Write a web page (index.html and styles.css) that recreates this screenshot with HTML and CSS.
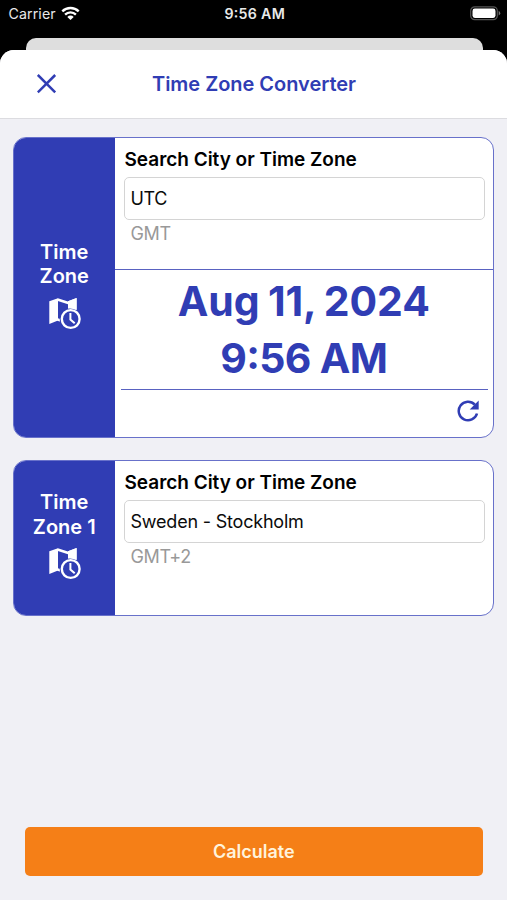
FILE: index.html
```html
<!DOCTYPE html>
<html lang="en">
<head>
<meta charset="utf-8">
<title>Time Zone Converter</title>
<link rel="stylesheet" href="styles.css">
</head>
<body>
<svg class="defs" width="0" height="0" aria-hidden="true">
  <symbol id="map-clock" viewBox="0 0 33 33">
    <path fill="#fff" d="M1.300 4.200 10 1.200V23.400L1.300 27ZM20 4.300 28.600 1v16H20Z"/>
    <path fill="none" stroke="#fff" stroke-width="2.600" d="m9.500 2.600 10.800 3.500M9.500 22.400l6 1.800"/>
    <circle cx="22.700" cy="22" r="11" fill="#303db4"/>
    <path fill="#fff" d="M20 4.300 28.600 1v12.200q-4-2.300-8.600-1.700Z"/>
    <circle cx="22.700" cy="22" r="8.900" fill="#303db4" stroke="#fff" stroke-width="2.400"/>
    <path fill="none" stroke="#fff" stroke-width="2" d="M22.400 16v6.500l4.300 3.700"/>
  </symbol>
</svg>
<header class="status">
  <div class="carrier"><span>Carrier</span>
    <svg width="19" height="15" viewBox="0 0 19 15"><g fill="none" stroke="#fff" stroke-width="2.400"><path d="M1.300 5.300a11.700 11.700 0 0 1 16.400 0"/><path d="M4.100 8.600a7.700 7.700 0 0 1 10.800 0"/></g><path fill="#fff" d="M9.500 14 6.300 10.900a4.600 4.600 0 0 1 6.400 0Z"/></svg>
  </div>
  <div class="clock">9:56 AM</div>
  <svg class="battery" width="31" height="15" viewBox="0 0 31 15"><rect x=".7" y=".8" width="26.600" height="12.900" rx="4" fill="none" stroke="#555" stroke-width="1.200"/><rect x="2.500" y="2.600" width="23" height="9.300" rx="2.300" fill="#fff"/><path fill="#777" d="M28.700 4.800q3.100 2.400 0 4.800Z"/></svg>
</header>
<div class="behind"></div>
<main class="sheet">
  <nav class="bar">
    <svg class="close" width="20" height="20" viewBox="0 0 20 20"><path d="m.8 1 17.400 17.400m0-17.400L.8 18.400" fill="none" stroke="#303db4" stroke-width="2.500"/></svg>
    <h1 class="title">Time Zone Converter</h1>
  </nav>
  <section class="card card-main">
    <aside class="side"><span>Time<br>Zone</span><svg class="icon" width="33" height="33"><use href="#map-clock"/></svg></aside>
    <div class="body">
      <div class="search">
        <div class="label">Search City or Time Zone</div>
        <div class="field"><span class="utc">UTC</span></div>
        <div class="offset">GMT</div>
      </div>
      <div class="when"><div class="date">Aug 11, 2024</div><div class="time">9:56 AM</div></div>
      <div class="actions">
        <svg width="22" height="22" viewBox="0 0 22 22"><path d="M20 13.500A9.300 9.300 0 1 1 17.800 4.600" fill="none" stroke="#303db4" stroke-width="2.500"/><path fill="#303db4" d="M21.700.6v9h-9Z"/></svg>
      </div>
    </div>
  </section>
  <section class="card card-second">
    <aside class="side"><span>Time<br>Zone 1</span><svg class="icon" width="33" height="33"><use href="#map-clock"/></svg></aside>
    <div class="body">
      <div class="search">
        <div class="label">Search City or Time Zone</div>
        <div class="field"><span class="city">Sweden - Stockholm</span></div>
        <div class="offset">GMT+2</div>
      </div>
    </div>
  </section>
  <button class="calculate">Calculate</button>
</main>
</body>
</html>
```
FILE: styles.css
```css
* { box-sizing: border-box; }
body {
  margin: 0;
  height: 900px;
  overflow: hidden;
  display: flex;
  flex-direction: column;
  background: #000;
  font-family: Inter, "Liberation Sans", sans-serif;
  color: #0b0b0b;
}
svg { display: block; flex: none; }
.defs { position: absolute; }
.status {
  height: 38px;
  flex: none;
  display: grid;
  grid-template-columns: 1fr auto 1fr;
  align-items: start;
  padding: 6px 6px 0 8.5px;
  color: #e9e9e9;
  font-size: 14.2px;
  line-height: 16px;
}
.carrier { display: flex; gap: 5.5px; letter-spacing: 0.1px; }
.clock { font-weight: 600; letter-spacing: 0.3px; font-feature-settings: "case"; }
.battery { justify-self: end; }
.behind {
  height: 12px;
  flex: none;
  margin: 0 24.5px 0 25.5px;
  background: #dedede;
  border-radius: 10px 10px 0 0;
}
.sheet {
  flex: 1;
  display: flex;
  flex-direction: column;
  background: #f0f0f5;
  border-radius: 14px 14px 0 0;
  overflow: hidden;
}
.bar {
  height: 69px;
  flex: none;
  display: grid;
  grid-template-columns: 1fr auto 1fr;
  align-items: center;
  padding-left: 37px;
  padding-right: 36px;
  background: #fff;
  border-bottom: 1px solid #dcdce0;
}
.title {
  margin: 0;
  font-size: 20px;
  line-height: 24px;
  font-weight: 600;
  letter-spacing: -0.03px;
  color: #303db4;
}
.card {
  flex: none;
  display: flex;
  margin: 0 13px;
  background: #fff;
  border: 1px solid #6871ca;
  border-radius: 13px;
  overflow: hidden;
}
.card-main { height: 301px; margin-top: 18px; }
.card-second { height: 156px; margin-top: 22px; }
.side {
  width: 100.5px;
  flex: none;
  display: flex;
  flex-direction: column;
  align-items: center;
  justify-content: center;
  gap: 8px;
  padding-bottom: 6px;
  background: #303db4;
  color: #fff;
  font-size: 20px;
  line-height: 24.5px;
  font-weight: 600;
  text-align: center;
}
.body { flex: 1; display: flex; flex-direction: column; }
.search { height: 131px; padding: 9px 8px 0 9px; }
.label {
  margin-left: 1px;
  font-size: 19px;
  line-height: 25px;
  font-weight: 600;
  letter-spacing: -0.02px;
  color: #000;
  white-space: nowrap;
}
.field {
  height: 43px;
  margin-top: 4.5px;
  display: flex;
  align-items: center;
  padding-left: 6px;
  border: 1px solid #d4d4d4;
  border-radius: 5px;
  font-size: 18px;
}
.utc { letter-spacing: -0.4px; }
.city { letter-spacing: -0.2px; }
.offset {
  margin: 3px 0 0 7px;
  font-size: 18px;
  line-height: 22px;
  letter-spacing: -0.4px;
  color: #999;
}
.when {
  height: 121px;
  padding-top: 3px;
  border-top: 1px solid #5962c1;
  color: #303db4;
  font-size: 41px;
  line-height: 57px;
  font-weight: 700;
  text-align: center;
}
.date { letter-spacing: -0.1px; word-spacing: -1.2px; }
.time { letter-spacing: -0.7px; font-feature-settings: "case"; }
.actions {
  flex: 1;
  display: flex;
  justify-content: flex-end;
  margin: -1px 5px 0 6px;
  padding: 10px 9px 0 0;
  border-top: 1px solid #5962c1;
}
.calculate {
  height: 49px;
  margin: auto 24.5px 24.5px 25px;
  padding: 2px 0 0;
  border: 0;
  border-radius: 5px;
  background: #f57f17;
  color: #fff3dc;
  font: 600 18px/22px Inter, "Liberation Sans", sans-serif;
}
```
